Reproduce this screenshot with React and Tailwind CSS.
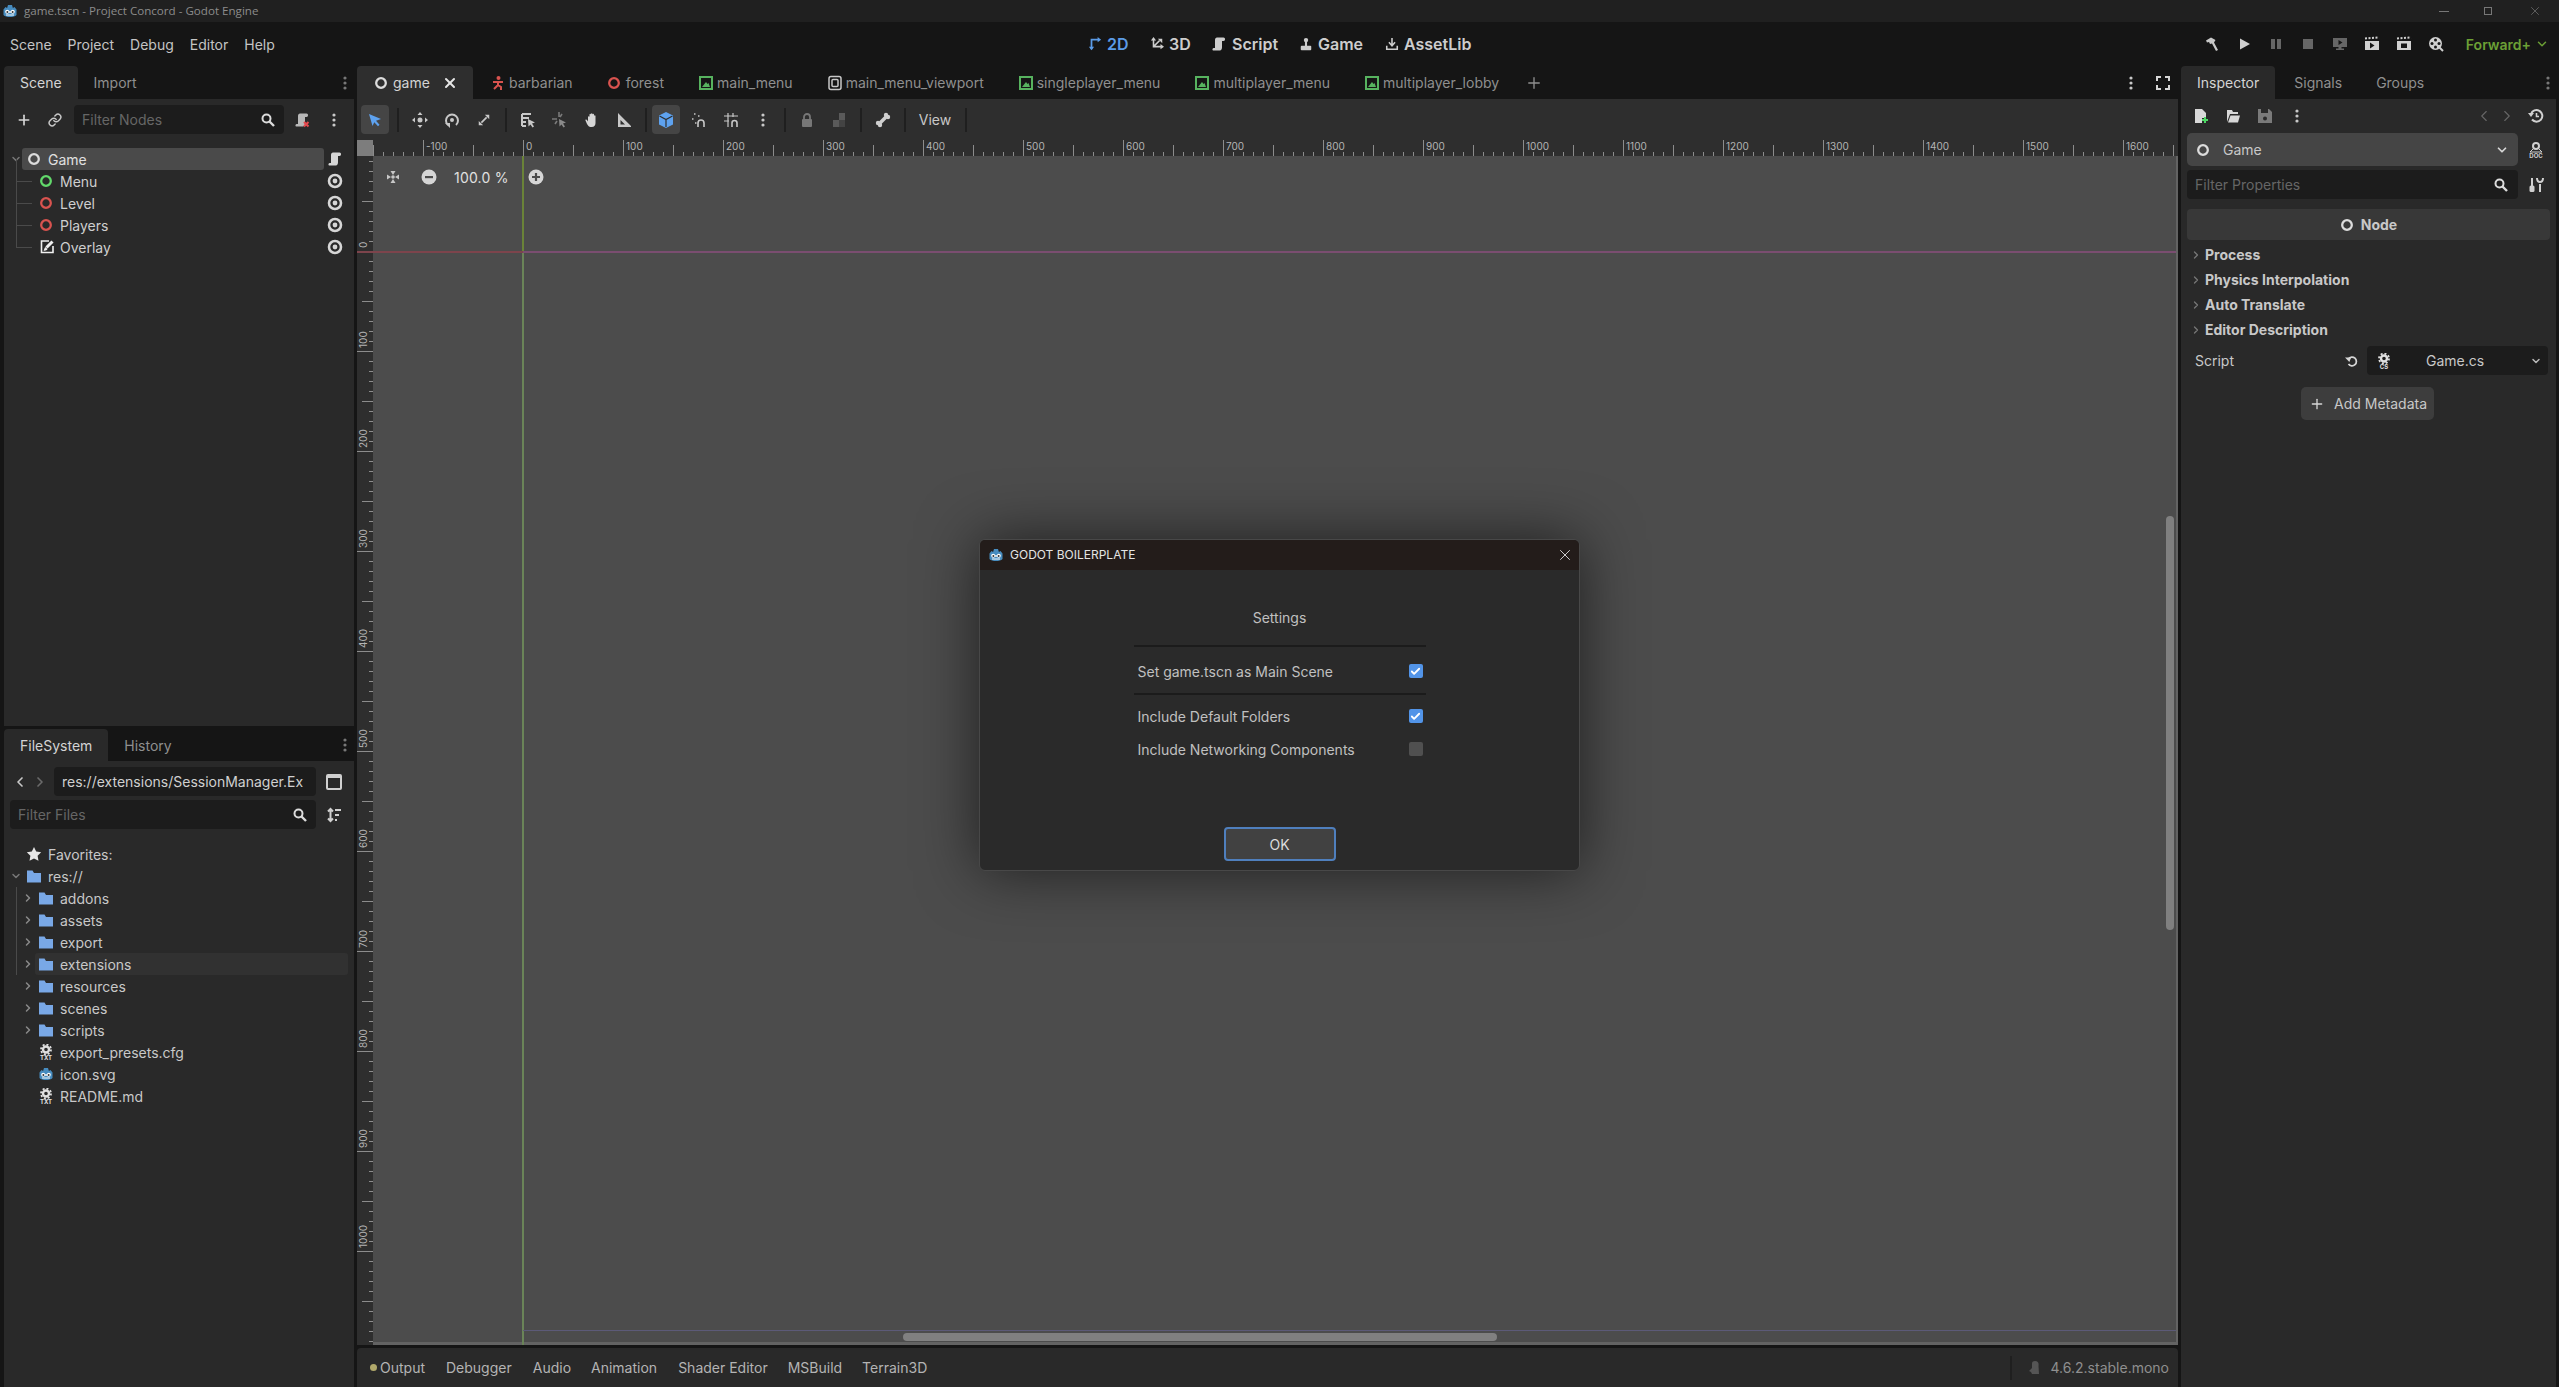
import React from "react";
import { Check, ChevronDown, ChevronLeft, ChevronRight, Link, Plus, X } from "lucide-react";

const Svg = ({ size = 16, children, className = "" }) => (
  <svg width={size} height={size} viewBox="0 0 16 16" className={`shrink-0 ${className}`}>
    {children}
  </svg>
);

const GodotLogo = ({ size = 16 }) => (
  <Svg size={size}>
    <path fill="#478cbf" d="M1.5 6.5 3.5 4l1.600 1L6 2h4l.9 3 1.600-1 2 2.500V12c-2.500 2.800-10.500 2.800-13 0z" />
    <circle cx="5.200" cy="8.800" r="2" fill="#fff" />
    <circle cx="10.800" cy="8.800" r="2" fill="#fff" />
    <circle cx="5.400" cy="9" r="1" fill="#333" />
    <circle cx="10.600" cy="9" r="1" fill="#333" />
    <rect x="7.300" y="8" width="1.400" height="2" fill="#fff" />
    <path d="M4 12h8" stroke="#fff" strokeWidth="1" />
  </Svg>
);

const Node = ({ color = "#dcdcdc", size = 14 }) => (
  <Svg size={size}>
    <circle cx="8" cy="8" r="5.500" fill="none" stroke={color} strokeWidth="2.600" />
  </Svg>
);

const Eye = () => (
  <Svg>
    <circle cx="8" cy="8" r="6" fill="none" stroke="#d6d6d6" strokeWidth="2.600" />
    <circle cx="8" cy="8" r="2.400" fill="#d6d6d6" />
  </Svg>
);

const Dots = ({ color = "#c8c8c8" }) => (
  <Svg>
    <circle cx="8" cy="3" r="1.600" fill={color} />
    <circle cx="8" cy="8" r="1.600" fill={color} />
    <circle cx="8" cy="13" r="1.600" fill={color} />
  </Svg>
);

const Search = () => (
  <Svg>
    <circle cx="6.500" cy="6.500" r="4" fill="none" stroke="#dcdcdc" strokeWidth="2" />
    <path d="m9.500 9.500 4.500 4.500" stroke="#dcdcdc" strokeWidth="2.400" />
  </Svg>
);

const Scroll = ({ color = "#d6d6d6", badge }) => (
  <Svg>
    <path fill={color} d="M6 1.500h6.500c2 0 2 3.500 0 3.500H11v6.500c0 2.500-1.500 3-3 3H2c-.8 0-.8-2.500.5-2.500H4V4c0-1.500.8-2.500 2-2.500z" />
    {badge && <path d="m10 10 4.500 4.500m0-4.500L10 14.500" stroke="#e5484d" strokeWidth="2" />}
  </Svg>
);

const Folder = ({ size = 16 }) => (
  <Svg size={size}>
    <path fill="#79a8e6" d="M1 2.500h5.500L8 5h7v9.500H1z" />
  </Svg>
);

const GearText = ({ label = "TXT", color = "#e0e0e0" }) => (
  <Svg>
    <circle cx="8" cy="5.500" r="3" fill="none" stroke={color} strokeWidth="2.400" />
    <circle cx="8" cy="5.500" r="5" fill="none" stroke={color} strokeWidth="1.800" strokeDasharray="2 1.900" />
    <text x="8" y="15.500" textAnchor="middle" fontSize="6" fontWeight="700" fill={color}>
      {label}
    </text>
  </Svg>
);

const ControlIcon = () => (
  <Svg>
    <path d="M10 2H2.500v11.500H14V7" fill="none" stroke="#f0f0f0" strokeWidth="1.600" />
    <path d="M13.500 2.500 7.500 8.500" stroke="#f0f0f0" strokeWidth="3" />
    <path fill="#f0f0f0" d="M6.500 8 8.500 10c-.5 1.500-2.500 2-4 1.500.8-.8.800-2.800 2-3.500z" />
  </Svg>
);

const SceneImage = () => (
  <Svg>
    <rect x="2" y="2" width="12" height="12" fill="none" stroke="#57b35f" strokeWidth="2" />
    <path fill="#57b35f" d="m4 12 4-5 1.500 2 1-1L12 12z" />
  </Svg>
);

const ViewportIcon = () => (
  <Svg>
    <rect x="2" y="1.500" width="12" height="13" rx="2" fill="none" stroke="#c8c8c8" strokeWidth="1.500" />
    <rect x="5" y="4.500" width="6" height="7" rx="1" fill="none" stroke="#c8c8c8" strokeWidth="1.500" />
  </Svg>
);

const RunnerIcon = () => (
  <Svg>
    <circle cx="8.500" cy="3" r="2" fill="#d9534f" />
    <path d="M3 7h10M8 6v4m0 0-4 4m4-4 3 2v3" stroke="#d9534f" strokeWidth="2" fill="none" />
  </Svg>
);

const editorTabs = [
  { name: "barbarian", icon: <RunnerIcon /> },
  { name: "forest", icon: <Node color="#d9534f" /> },
  { name: "main_menu", icon: <SceneImage /> },
  { name: "main_menu_viewport", icon: <ViewportIcon /> },
  { name: "singleplayer_menu", icon: <SceneImage /> },
  { name: "multiplayer_menu", icon: <SceneImage /> },
  { name: "multiplayer_lobby", icon: <SceneImage /> },
];

const sceneRows = [
  { name: "Menu", icon: <Node color="#62d96b" /> },
  { name: "Level", icon: <Node color="#d9534f" /> },
  { name: "Players", icon: <Node color="#d9534f" /> },
  { name: "Overlay", icon: <ControlIcon /> },
];

const folders = ["addons", "assets", "export", "extensions", "resources", "scenes", "scripts"];

const Tab = ({ active, children, className = "" }) => (
  <div className={`flex h-full items-center px-4 rounded-t-[4px] ${active ? "bg-[#292929] text-[#d4d4d4]" : "text-[#8f8f8f]"} ${className}`}>
    {children}
  </div>
);

const Sep = () => <div className="h-6 w-[2px] bg-[#1f1f1f] mx-[5px] shrink-0" />;

const Tool = ({ children, active }) => (
  <div className={`flex h-[29px] shrink-0 items-center justify-center ${active ? "w-7 rounded-[4px] bg-[#454545]" : "w-8"}`}>
    {children}
  </div>
);

const ModeButton = ({ icon, label, active, className }) => (
  <div className={`flex items-center gap-[5px] font-semibold text-[16px] ${active ? "text-[#5b9be6]" : "text-[#cdcdcd]"} ${className}`}>
    {icon}
    <span>{label}</span>
  </div>
);

const Ruler = () => {
  const ticks = [];
  for (let i = 0; i <= 180; i++) {
    const value = i * 10 - 150;
    const big = value % 100 === 0;
    const mid = value % 50 === 0;
    ticks.push(<line key={i} x1={i * 10 + 0.5} x2={i * 10 + 0.5} y1={big ? 0 : mid ? 5 : 12} y2={16} stroke="#8c8c8c" strokeWidth="1" />);
  }
  const labels = [];
  for (let v = -100; v <= 1600; v += 100) {
    labels.push(
      <text key={v} x={150 + v + 3} y={10} fontSize="10" fill="#b4b4b4">
        {v}
      </text>,
    );
  }
  return (
    <svg width="1805" height="16" className="block">
      {ticks}
      {labels}
    </svg>
  );
};

const VRuler = () => {
  const ticks = [];
  for (let i = 0; i <= 120; i++) {
    const y = i * 10 + 5;
    const value = y - 95;
    const big = value % 100 === 0;
    const mid = value % 50 === 0;
    ticks.push(<line key={i} x1={big ? 0 : mid ? 5 : 12} x2={16} y1={y + 0.5} y2={y + 0.5} stroke="#8c8c8c" strokeWidth="1" />);
  }
  const labels = [];
  for (let v = 0; v <= 1000; v += 100) {
    labels.push(
      <text key={v} x={0} y={0} fontSize="10" fill="#b4b4b4" transform={`translate(10 ${95 + v - 3}) rotate(-90)`}>
        {v}
      </text>,
    );
  }
  return (
    <svg width="16" height="1190" className="block shrink-0">
      {ticks}
      {labels}
    </svg>
  );
};

const TitleBar = () => (
  <div className="flex h-[22px] shrink-0 items-center bg-[#202020] pl-[2px]">
    <GodotLogo />
    <span className="ml-[6px] text-[11.6px] text-[#8c8c8c] [font-family:'Open_Sans',sans-serif]">
      game.tscn - Project Concord - Godot Engine
    </span>
    <div className="ml-auto flex items-center">
      <div className="h-px w-[10px] bg-[#777] mr-[35px]" />
      <div className="mr-[36px] h-[8px] w-[8px] border border-[#777]" />
      <X size={14} strokeWidth={1} className="mr-[17px] text-[#888]" />
    </div>
  </div>
);

const MenuBar = () => (
  <div className="flex h-[44px] shrink-0 items-center bg-[#151515] text-[14px] text-[#c4c4c4]">
    <div className="flex w-[1088px] shrink-0 gap-[16px] pl-[10px]">
      <span>Scene</span>
      <span>Project</span>
      <span>Debug</span>
      <span>Editor</span>
      <span>Help</span>
    </div>
    <ModeButton active className="w-[62px]" label="2D" icon={
      <Svg size={14}>
        <path d="M4 14V3h8" fill="none" stroke="#5b9be6" strokeWidth="2" />
        <path d="M11 0v6l4-3zM1 11h6l-3 4z" fill="#5b9be6" />
      </Svg>
    } />
    <ModeButton className="w-[61px]" label="3D" icon={
      <Svg size={14}>
        <path d="M4 3v8h9M4 11l7-7" fill="none" stroke="#cdcdcd" strokeWidth="1.800" />
        <path d="M1 4l3-4 3 4zM12 8l4 3-4 3zM9 2h5v5z" fill="#cdcdcd" />
      </Svg>
    } />
    <ModeButton className="w-[88px]" label="Script" icon={<Scroll color="#cdcdcd" />} />
    <ModeButton className="w-[86px]" label="Game" icon={
      <Svg size={14}>
        <circle cx="8" cy="3.500" r="2.500" fill="#cdcdcd" />
        <rect x="6.800" y="4" width="2.400" height="7" fill="#cdcdcd" />
        <rect x="2" y="10" width="12" height="5" rx="1" fill="#cdcdcd" />
      </Svg>
    } />
    <ModeButton className="" label="AssetLib" icon={
      <Svg size={14}>
        <path d="M8 1v8M4.500 6 8 10l3.500-4M2 10v4h12v-4" fill="none" stroke="#cdcdcd" strokeWidth="1.800" />
      </Svg>
    } />
    <div className="ml-auto flex items-center text-[#c8c8c8]">
      <div className="w-8 flex justify-center">
        <Svg>
          <path fill="#c8c8c8" d="M2 4.500 7 1.500l4.500 2.500-1.500 2.500 4 7.500-2 1-4-7.500-2 .5-1-2-2 .5z" />
        </Svg>
      </div>
      <div className="w-8 flex justify-center">
        <Svg><path fill="#d0d0d0" d="M4 2.500 14 8 4 13.500z" /></Svg>
      </div>
      <div className="w-8 flex justify-center">
        <Svg><path fill="#666" d="M3 3h4v10H3zM9 3h4v10H9z" /></Svg>
      </div>
      <div className="w-8 flex justify-center">
        <Svg><rect x="3" y="3" width="10" height="10" fill="#666" /></Svg>
      </div>
      <div className="w-8 flex justify-center">
        <Svg>
          <path fill="#666" d="M1 2h14v9H9.500v1.500H12V14H4v-1.500h2.500V11H1z" />
          <path fill="#151515" d="m6.500 4 4 2.500-4 2.500z" />
        </Svg>
      </div>
      <div className="w-8 flex justify-center">
        <Svg>
          <path stroke="#d0d0d0" strokeWidth="2" strokeDasharray="2 1.500" d="M1 2.500 15 1.500" />
          <path fill="#d0d0d0" d="M1 5h14v9H1z" />
          <path fill="#151515" d="m6 6.500 4.500 3-4.500 3z" />
        </Svg>
      </div>
      <div className="w-8 flex justify-center">
        <Svg>
          <path stroke="#d0d0d0" strokeWidth="2" strokeDasharray="2 1.500" d="M1 2.500 15 1.500" />
          <path fill="#d0d0d0" d="M1 5h14v9H1z" />
          <rect x="5" y="7.500" width="6" height="4.500" fill="#151515" />
        </Svg>
      </div>
      <div className="w-8 flex justify-center">
        <Svg>
          <circle cx="7.500" cy="7.500" r="6.500" fill="#d0d0d0" />
          <circle cx="7.500" cy="4" r="1.500" fill="#151515" />
          <circle cx="4" cy="7.500" r="1.500" fill="#151515" />
          <circle cx="11" cy="7.500" r="1.500" fill="#151515" />
          <circle cx="7.500" cy="11" r="1.500" fill="#151515" />
          <path stroke="#d0d0d0" strokeWidth="2" d="m11 11 4 4" />
        </Svg>
      </div>
      <span className="ml-[14px] text-[14px] font-semibold text-[#6ca035]">Forward+</span>
      <ChevronDown size={14} strokeWidth={2.500} className="ml-[4px] mr-[10px] text-[#6ca035]" />
    </div>
  </div>
);

const SceneDock = () => (
  <div className="flex h-[660px] shrink-0 flex-col">
    <div className="flex h-[33px] shrink-0 items-center text-[14px]">
      <Tab active>Scene</Tab>
      <Tab>Import</Tab>
      <div className="ml-auto mr-[1px]"><Dots color="#777" /></div>
    </div>
    <div className="flex-1 bg-[#292929] text-[14px] text-[#cfcfcf]">
      <div className="flex h-[35px] items-end">
        <div className="ml-[10px] flex h-[29px] w-[20px] items-center justify-center">
          <Plus size={16} strokeWidth={2.500} className="text-[#d6d6d6]" />
        </div>
        <div className="ml-[11px] flex h-[29px] w-[20px] items-center justify-center">
          <Link size={14} strokeWidth={2.500} className="text-[#c8c8c8]" />
        </div>
        <div className="ml-[9px] flex h-[29px] w-[210px] items-center justify-between rounded-[4px] bg-[#1c1c1c] pl-2 pr-[8px] text-[#666]">
          <span>Filter Nodes</span>
          <Search />
        </div>
        <div className="ml-[10px] flex h-[29px] items-center"><Scroll color="#b8b8b8" badge /></div>
        <div className="ml-[16px] flex h-[29px] items-center"><Dots /></div>
      </div>
      <div className="mt-[14px] flex h-[22px] items-center">
        <ChevronDown size={12} strokeWidth={3} className="ml-[6px] text-[#777]" />
        <div className="flex h-[22px] w-[302px] items-center rounded-[3px] bg-[#4a4a4a] pl-[5px] text-[#e0e0e0]">
          <Node />
          <span className="ml-[7px]">Game</span>
        </div>
        <div className="ml-[3px]"><Scroll /></div>
      </div>
      {sceneRows.map((row) => (
        <div key={row.name} className="relative flex h-[22px] items-center pl-[35px]">
          <div className="absolute left-[12px] top-1/2 h-px w-[16px] bg-[#4a4a4a]" />
          <div className="absolute left-[12px] top-[-11px] h-[22px] w-px bg-[#4a4a4a]" />
          <div className="w-[14px]">{row.icon}</div>
          <span className="ml-[7px] flex-1">{row.name}</span>
          <div className="mr-[11px]"><Eye /></div>
        </div>
      ))}
    </div>
  </div>
);

const FileDock = () => (
  <div className="mt-[3px] flex flex-1 flex-col">
    <div className="flex h-[32px] shrink-0 items-center text-[14px]">
      <Tab active>FileSystem</Tab>
      <Tab>History</Tab>
      <div className="ml-auto mr-[1px]"><Dots color="#777" /></div>
    </div>
    <div className="flex-1 bg-[#292929] text-[14px] text-[#c8c8c8]">
      <div className="flex h-[35px] items-end">
        <ChevronLeft size={16} strokeWidth={2.500} className="mb-[6px] ml-[8px] text-[#c8c8c8]" />
        <ChevronRight size={16} strokeWidth={2.500} className="mb-[6px] ml-[4px] text-[#6a6a6a]" />
        <div className="ml-[6px] flex h-[29px] w-[262px] items-center overflow-hidden whitespace-nowrap rounded-[4px] bg-[#1c1c1c] pl-2 text-[#d0d0d0]">
          res://extensions/SessionManager.Ex
        </div>
        <div className="mb-[6px] ml-[10px] h-[16px] w-[16px] rounded-[2px] border-2 border-t-[4px] border-[#d0d0d0]" />
      </div>
      <div className="mt-[4px] flex h-[29px] items-center">
        <div className="ml-[6px] flex h-[29px] w-[306px] items-center justify-between rounded-[4px] bg-[#1c1c1c] pl-2 pr-[8px] text-[#666]">
          <span>Filter Files</span>
          <Search />
        </div>
        <div className="ml-[10px]">
          <Svg>
            <path d="M4.500 2v12M2 4.500 4.500 2 7 4.500M2 11.500 4.500 14 7 11.500" fill="none" stroke="#d0d0d0" strokeWidth="2" />
            <path d="M9 3h6M9 8h4M9 13h2" stroke="#d0d0d0" strokeWidth="1.800" />
          </Svg>
        </div>
      </div>
      <div className="mt-[14px] flex h-[22px] items-center pl-[22px]">
        <Svg>
          <path fill="#e6e6e6" d="m8 1 2.200 4.600 5 .7-3.600 3.500.9 5L8 12.400l-4.500 2.400.9-5L.8 6.300l5-.7z" />
        </Svg>
        <span className="ml-[6px]">Favorites:</span>
      </div>
      <div className="flex h-[22px] items-center pl-[6px]">
        <ChevronDown size={12} strokeWidth={3} className="mr-[4px] text-[#777]" />
        <Folder />
        <span className="ml-[6px]">res://</span>
      </div>
      {folders.map((name, i) => (
        <div key={name} className="relative flex h-[22px] items-center pl-[18px]">
          {name === "extensions" && (
            <div className="absolute left-[31px] right-[6px] top-0 h-[22px] rounded-[3px] bg-[#313131]" />
          )}
          {i < 4 && <div className="absolute left-[12px] top-0 h-[22px] w-px bg-[#4a4a4a]" />}
          <ChevronRight size={12} strokeWidth={3} className="relative mr-[4px] text-[#8a8a8a]" />
          <div className="relative"><Folder /></div>
          <span className="relative ml-[6px]">{name}</span>
        </div>
      ))}
      {[
        { name: "export_presets.cfg", icon: <GearText /> },
        { name: "icon.svg", icon: <GodotLogo /> },
        { name: "README.md", icon: <GearText /> },
      ].map((file) => (
        <div key={file.name} className="flex h-[22px] items-center pl-[34px]">
          {file.icon}
          <span className="ml-[6px]">{file.name}</span>
        </div>
      ))}
    </div>
  </div>
);

const EditorColumn = () => (
  <div className="mx-[3px] flex w-[1821px] shrink-0 flex-col">
    <div className="flex h-[33px] shrink-0 items-center text-[14px] text-[#8f8f8f]">
      <div className="flex h-full w-[116px] items-center rounded-t-[4px] bg-[#2e2e2e] pl-[17px] text-[#d4d4d4]">
        <Node />
        <span className="ml-[5px]">game</span>
        <X size={16} strokeWidth={3} className="ml-[12px] text-[#e6e6e6]" />
      </div>
      {editorTabs.map((tab) => (
        <div key={tab.name} className="flex h-full items-center pl-[17px] pr-[17px]">
          <div className="w-[14px]">{tab.icon}</div>
          <span className="ml-[5px]">{tab.name}</span>
        </div>
      ))}
      <Plus size={18} strokeWidth={1.800} className="ml-[9px] text-[#8f8f8f]" />
      <div className="ml-auto flex items-center">
        <Dots />
        <div className="ml-[16px] mr-[7px]">
          <Svg>
            <path d="M2 6V2h4M10 2h4v4M2 10v4h4M10 14h4v-4" fill="none" stroke="#d6d6d6" strokeWidth="2" />
          </Svg>
        </div>
      </div>
    </div>
    <div className="flex h-[41px] shrink-0 items-center bg-[#2e2e2e] pl-[4px] text-[14px] text-[#c8c8c8]">
      <Tool active>
        <Svg>
          <path fill="#5ea2ef" d="M2 2 14 7l-5 1.800 3.500 4-1.500 1.500-3.700-4L5.500 14z" />
        </Svg>
      </Tool>
      <div className="ml-[8px] h-6 w-[2px] bg-[#1f1f1f]" />
      <div className="w-[5px]" />
      <Tool>
        <Svg>
          <path fill="#c8c8c8" d="M8 0l2.500 3h-5zM8 16l-2.500-3h5zM0 8l3-2.500v5zM16 8l-3 2.500v-5z" />
          <circle cx="8" cy="8" r="2.500" fill="#c8c8c8" />
        </Svg>
      </Tool>
      <Tool>
        <Svg>
          <path d="M4 13a6 6 0 1 1 8 0" fill="none" stroke="#c8c8c8" strokeWidth="2" />
          <circle cx="8" cy="8" r="2" fill="#c8c8c8" />
          <path fill="#c8c8c8" d="M1 11h5v5z" />
        </Svg>
      </Tool>
      <Tool>
        <Svg size={14}>
          <path d="M5 11 11 5" stroke="#c8c8c8" strokeWidth="2" />
          <path fill="#c8c8c8" d="M9 2h5v5zM2 9v5h5z" />
        </Svg>
      </Tool>
      <Sep />
      <Tool>
        <Svg>
          <path d="M2 2h9M2 6h7M2 10h4M2 14h4" stroke="#c8c8c8" strokeWidth="2" />
          <path d="M2 2v12" stroke="#c8c8c8" strokeWidth="2" />
          <path fill="#c8c8c8" d="M8 7l7 3.500-3 1 2 3-1.500 1-2-3-2 2z" />
        </Svg>
      </Tool>
      <Tool>
        <Svg>
          <path d="M7 0v5M0 7h5M10 2 8 5M3 12l2-3" stroke="#7a7a7a" strokeWidth="1.600" />
          <path fill="#8a8a8a" d="M7 7l7 3.500-3 1 2 3-1.500 1-2-3-2 2z" />
        </Svg>
      </Tool>
      <Tool>
        <Svg>
          <path fill="#d6d6d6" d="M4 5c0-1 1.500-1 1.500 0V2.500c0-1 1.500-1 1.500 0V2c0-1 1.500-1 1.500 0v.500c0-1 1.500-1 1.500 0V4c0-1 1.500-1 1.500 0v7c0 2-1 4-4 4s-3.500-1.500-4.500-3L1.500 8.500C1 7.500 2.500 7 3 8l1 1.500z" />
        </Svg>
      </Tool>
      <Tool>
        <Svg>
          <path fill="#c8c8c8" fillRule="evenodd" d="M2 1 15 14v1H2zM4.500 8v4.500H9z" />
        </Svg>
      </Tool>
      <Sep />
      <Tool active>
        <Svg>
          <path fill="#5ea2ef" d="M8 0 15 3.500v9L8 16 1 12.500v-9z" />
          <path d="M1.500 4 8 7.500 14.500 4M8 7.500V15" stroke="#2e2e2e" strokeWidth="1.200" fill="none" />
        </Svg>
      </Tool>
      <div className="w-[3px]" />
      <Tool>
        <Svg>
          <path d="M8 15v-4a3 3 0 0 1 6 0v4" transform="translate(-1 0)" fill="none" stroke="#c8c8c8" strokeWidth="1.600" />
          <path d="M3 2h1.500M1 7h1.500M4 11h1.500M7 4h1.500" stroke="#c8c8c8" strokeWidth="1.600" />
        </Svg>
      </Tool>
      <Tool>
        <Svg>
          <path d="M5 1v14M10 1v4M1 4h14M1 9h5" stroke="#c8c8c8" strokeWidth="1.200" />
          <path d="M9 15v-4a2.500 2.500 0 0 1 5 0v4" fill="none" stroke="#c8c8c8" strokeWidth="1.600" />
        </Svg>
      </Tool>
      <Tool><Dots /></Tool>
      <Sep />
      <Tool>
        <Svg>
          <path d="M5 7V5a3 3 0 0 1 6 0v2" fill="none" stroke="#777" strokeWidth="1.800" />
          <rect x="3" y="7" width="10" height="8" rx="1" fill="#777" />
        </Svg>
      </Tool>
      <Tool>
        <Svg>
          <path fill="#5a5a5a" d="M8 1h6v7H8zM2 8h6v7H2z" />
          <path fill="#434343" d="M8 8h6v7H8z" />
        </Svg>
      </Tool>
      <Sep />
      <Tool>
        <Svg>
          <path d="M5 11 11 5" stroke="#cfcfcf" strokeWidth="3.500" />
          <circle cx="11" cy="3" r="2.200" fill="#cfcfcf" />
          <circle cx="13" cy="5" r="2.200" fill="#cfcfcf" />
          <circle cx="3" cy="11" r="2.200" fill="#cfcfcf" />
          <circle cx="5" cy="13" r="2.200" fill="#cfcfcf" />
        </Svg>
      </Tool>
      <Sep />
      <div className="flex w-12 shrink-0 justify-center">View</div>
      <div className="ml-[6px] h-6 w-[2px] bg-[#1f1f1f]" />
    </div>
    <div className="flex h-[16px] shrink-0 bg-[#2e2e2e]">
      <div className="h-4 w-4 bg-[#7d7d7d]" />
      <Ruler />
    </div>
    <div className="relative flex flex-1 overflow-hidden bg-[#2e2e2e]">
      <VRuler />
      <div className="flex-1 border-b-[3px] border-r-2 border-[#636363] bg-[#4c4c4c]" />
      <div className="absolute left-0 top-[95px] h-[2px] w-[166px] bg-[#7d444c]" />
      <div className="absolute left-[166px] right-[2px] top-[95px] h-[2px] bg-[#7a4d70]" />
      <div className="absolute left-[165px] top-0 h-[95px] w-[2px] bg-[#6a8338]" />
      <div className="absolute bottom-0 left-[165px] top-[97px] w-[2px] bg-[#6a8458]" />
      <div className="absolute left-[166px] right-[2px] top-[1174px] h-px bg-[#5c5a78]" />
      <div className="absolute left-[546px] top-[1177px] h-[8px] w-[594px] rounded-full bg-[#808080]" />
      <div className="absolute right-[4px] top-[360px] h-[414px] w-[8px] rounded-full bg-[#808080]" />
      <div className="absolute left-[28px] top-[12px] flex h-[18px] items-center text-[14px] text-[#e0e0e0]">
        <Svg>
          <path fill="#c8c8c8" d="M8 6 5.500 2h5zM8 10l2.500 4h-5zM6 8 2 5.500v5zM10 8l4-2.500v5z" />
          <circle cx="8" cy="8" r="1.800" fill="#c8c8c8" />
        </Svg>
        <div className="ml-[20px]">
          <Svg>
            <circle cx="8" cy="8" r="7.500" fill="#d6d6d6" />
            <rect x="4" y="7" width="8" height="2.200" fill="#4c4c4c" />
          </Svg>
        </div>
        <span className="ml-[17px] w-[74px] tracking-[0.2px]">100.0 %</span>
        <Svg>
          <circle cx="8" cy="8" r="7.500" fill="#d6d6d6" />
          <path d="M8 4v8M4 8h8" stroke="#4c4c4c" strokeWidth="2.200" />
        </Svg>
      </div>
    </div>
    <div className="mt-[3px] flex h-[39px] shrink-0 items-center rounded-t-[4px] bg-[#292929] pl-[13px] text-[14px] text-[#b4b4b4]">
      <div className="h-[7px] w-[7px] rounded-full bg-[#b0a86a]" />
      <span className="ml-[3px]">Output</span>
      <span className="ml-[21px]">Debugger</span>
      <span className="ml-[21px]">Audio</span>
      <span className="ml-[20px]">Animation</span>
      <span className="ml-[21px]">Shader Editor</span>
      <span className="ml-[20px]">MSBuild</span>
      <span className="ml-[20px]">Terrain3D</span>
      <div className="ml-auto h-[24px] w-[2px] bg-[#1f1f1f]" />
      <div className="ml-[14px]">
        <Svg>
          <path fill="#555" d="M9 1c3 0 4 2 3.500 5l.5 8H6l-1-2-2-1 3-3V4c0-2 1-3 3-3z" />
        </Svg>
      </div>
      <span className="ml-[9px] mr-[9px] text-[#8f8f8f]">4.6.2.stable.mono</span>
    </div>
  </div>
);

const InspectorDock = () => (
  <div className="flex flex-1 flex-col pr-[3px]">
    <div className="flex h-[33px] shrink-0 items-center text-[14px]">
      <Tab active>Inspector</Tab>
      <Tab className="ml-[3px]">Signals</Tab>
      <Tab className="ml-[2px]">Groups</Tab>
      <div className="ml-auto"><Dots color="#777" /></div>
    </div>
    <div className="flex flex-1 flex-col bg-[#292929] text-[14px] text-[#c8c8c8]">
      <div className="flex h-[34px] items-center pl-[12px]">
        <div className="w-[32px]">
          <Svg>
            <path fill="#d8d8d8" d="M2 1h7l4 4v5H9v5H2z" />
            <path d="M12 9v6M9 12h6" stroke="#4cd964" strokeWidth="2" />
          </Svg>
        </div>
        <div className="w-[32px]">
          <Svg>
            <path fill="#d8d8d8" d="M2 2h5l1 2h5v2H5l-3 8z" />
            <path fill="#d8d8d8" d="M5.500 7.500H15l-2 7H3z" />
          </Svg>
        </div>
        <div className="w-[32px]">
          <Svg>
            <path fill="#7a7a7a" d="M1 1h11l3 3v11H1z" />
            <rect x="4" y="1" width="7" height="4" fill="#292929" />
            <circle cx="8" cy="10.500" r="2" fill="#292929" />
          </Svg>
        </div>
        <Dots />
        <div className="ml-auto flex items-center">
          <ChevronLeft size={18} strokeWidth={1.500} className="mr-[5px] text-[#666]" />
          <ChevronRight size={18} strokeWidth={1.500} className="mr-[12px] text-[#666]" />
          <div className="mr-[12px]">
            <Svg>
              <path d="M3 6a5.800 5.800 0 1 1 1 5.500" fill="none" stroke="#d0d0d0" strokeWidth="2" />
              <path fill="#d0d0d0" d="M0 5h6l-3 4z" />
              <path d="M8.500 5v3.500H11" fill="none" stroke="#d0d0d0" strokeWidth="1.600" />
            </Svg>
          </div>
        </div>
      </div>
      <div className="flex h-[33px] items-center pl-[6px]">
        <div className="flex h-[33px] w-[331px] items-center rounded-[5px] bg-[#454545] pl-[9px] pr-[9px] text-[#c8c8c8]">
          <Node />
          <span className="ml-[13px]">Game</span>
          <ChevronDown size={14} strokeWidth={3} className="ml-auto text-[#d6d6d6]" />
        </div>
        <div className="ml-[10px]">
          <Svg>
            <circle cx="8" cy="4" r="3" fill="none" stroke="#d0d0d0" strokeWidth="2" />
            <path d="m5 7-3 3h12l-3-3" fill="none" stroke="#d0d0d0" strokeWidth="1" />
            <text x="8" y="15.500" textAnchor="middle" fontSize="6" fontWeight="700" fill="#d0d0d0">DOC</text>
          </Svg>
        </div>
      </div>
      <div className="mt-[4px] flex h-[29px] items-center pl-[6px]">
        <div className="flex h-[29px] w-[331px] items-center justify-between rounded-[4px] bg-[#1c1c1c] pl-[8px] pr-[9px] text-[#666]">
          <span>Filter Properties</span>
          <Search />
        </div>
        <div className="ml-[10px]">
          <Svg>
            <path d="M4 1v8M12 7v8M9 1c0 3 1.500 4 3 4s3-1 3-4" fill="none" stroke="#d0d0d0" strokeWidth="2" />
            <rect x="1.500" y="8.500" width="5" height="6.500" rx="1.500" fill="#d0d0d0" />
          </Svg>
        </div>
      </div>
      <div className="mx-[6px] mt-[10px] flex h-[31px] items-center justify-center rounded-[4px] bg-[#383838] font-bold text-[#c8c8c8]">
        <Node />
        <span className="ml-[7px]">Node</span>
      </div>
      <div className="mt-[2px] font-bold">
        {["Process", "Physics Interpolation", "Auto Translate", "Editor Description"].map((name) => (
          <div key={name} className="flex h-[25px] items-center pl-[9px]">
            <ChevronRight size={12} strokeWidth={2.500} className="text-[#777]" />
            <span className="ml-[3px]">{name}</span>
          </div>
        ))}
      </div>
      <div className="mt-[4px] flex h-[29px] items-center pl-[14px]">
        <span className="w-[150px]">Script</span>
        <Svg size={14}>
          <path d="M4 5.500a5 5 0 1 1 0 6" fill="none" stroke="#d6d6d6" strokeWidth="2" />
          <path fill="#d6d6d6" d="M0 4h7l-2 5z" />
        </Svg>
        <div className="ml-[8px] flex h-[29px] w-[181px] items-center rounded-[4px] bg-[#1c1c1c] pl-[9px] pr-[6px]">
          <GearText label="CS" />
          <span className="ml-[34px]">Game.cs</span>
          <ChevronDown size={12} strokeWidth={3} className="ml-auto text-[#b8b8b8]" />
        </div>
      </div>
      <div className="mt-[12px] flex h-[33px] w-[133px] items-center self-center rounded-[5px] bg-[#3d3d3d] pl-[8px] ml-[-2px]">
        <Plus size={16} strokeWidth={2} className="text-[#d6d6d6]" />
        <span className="ml-[9px]">Add Metadata</span>
      </div>
    </div>
  </div>
);

const SettingRow = ({ label, checked, className }) => (
  <div className={`flex w-[292px] items-center justify-between pl-[4px] pr-[3px] ${className}`}>
    <span>{label}</span>
    {checked ? (
      <div className="flex h-[14px] w-[14px] items-center justify-center rounded-[2px] bg-[#5294e8]">
        <Check size={11} strokeWidth={4} className="text-white" />
      </div>
    ) : (
      <div className="h-[14px] w-[14px] rounded-[2px] bg-[#505050]" />
    )}
  </div>
);

const Dialog = () => (
  <div className="absolute left-[979px] top-[539px] flex h-[332px] w-[601px] flex-col overflow-hidden rounded-[6px] border border-[#484848] bg-[#2a2a2a] text-[14px] text-[#c0c0c0] shadow-[0_0_60px_rgba(0,0,0,0.6)]">
    <div className="flex h-[30px] shrink-0 items-center bg-[#231c1a] pl-[8px] pr-[5px]">
      <GodotLogo />
      <span className="ml-[6px] text-[12px] text-[#e4e4e4]">GODOT BOILERPLATE</span>
      <X size={18} strokeWidth={1.200} className="ml-auto text-[#e0e0e0]" />
    </div>
    <div className="flex flex-1 flex-col items-center">
      <span className="mt-[38px] leading-[20px]">Settings</span>
      <div className="mt-[17px] h-[2px] w-[292px] bg-[#1b1b1b]" />
      <SettingRow label="Set game.tscn as Main Scene" checked className="mt-[14px] h-[20px]" />
      <div className="mt-[12px] h-[2px] w-[292px] bg-[#1b1b1b]" />
      <SettingRow label="Include Default Folders" checked className="mt-[11px] h-[20px]" />
      <SettingRow label="Include Networking Components" className="mt-[13px] h-[20px]" />
      <div className="mt-[68px] flex h-[34px] w-[112px] items-center justify-center rounded-[4px] border-2 border-[#4f7fbd] bg-[#414141] text-[#dcdcdc]">
        OK
      </div>
    </div>
  </div>
);

export default function App() {
  return (
    <div className="relative flex h-[1387px] w-[2559px] flex-col overflow-hidden bg-[#151515] [font-family:Inter,sans-serif]">
      <TitleBar />
      <MenuBar />
      <div className="flex min-h-0 flex-1">
        <div className="flex w-[354px] shrink-0 flex-col pl-[4px]">
          <SceneDock />
          <FileDock />
        </div>
        <EditorColumn />
        <InspectorDock />
      </div>
      <Dialog />
    </div>
  );
}
